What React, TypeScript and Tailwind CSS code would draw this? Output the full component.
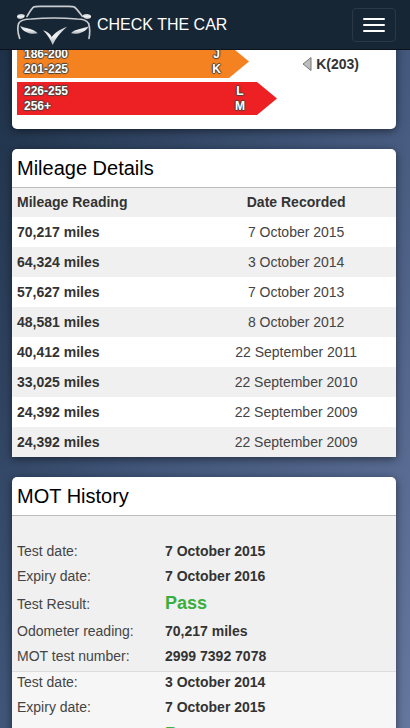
type MotTest = {
  rows: { label: string; value: string }[];
};

const bands = [
  {
    ranges: ["186-200", "201-225"],
    letters: ["J", "K"],
    size: "w-[232px] pr-7",
    fill: "bg-[#f58220]",
    marker: "K(203)"
  },
  {
    ranges: ["226-255", "256+"],
    letters: ["L", "M"],
    size: "w-[260px] pr-8",
    fill: "bg-[#ed2024]"
  }
];

const mileage = [
  { reading: "70,217 miles", date: "7 October 2015" },
  { reading: "64,324 miles", date: "3 October 2014" },
  { reading: "57,627 miles", date: "7 October 2013" },
  { reading: "48,581 miles", date: "8 October 2012" },
  { reading: "40,412 miles", date: "22 September 2011" },
  { reading: "33,025 miles", date: "22 September 2010" },
  { reading: "24,392 miles", date: "22 September 2009" },
  { reading: "24,392 miles", date: "22 September 2009" }
];

const motTests: MotTest[] = [
  {
    rows: [
      { label: "Test date:", value: "7 October 2015" },
      { label: "Expiry date:", value: "7 October 2016" },
      { label: "Test Result:", value: "Pass" },
      { label: "Odometer reading:", value: "70,217 miles" },
      { label: "MOT test number:", value: "2999 7392 7078" }
    ]
  },
  {
    rows: [
      { label: "Test date:", value: "3 October 2014" },
      { label: "Expiry date:", value: "7 October 2015" },
      { label: "Test Result:", value: "Pass" }
    ]
  }
];

function Logo() {
  return (
    <svg viewBox="0 0 225 123" className="h-[41px] w-[75px]" aria-hidden="true">
      <defs>
        <linearGradient id="chrome" x1="0" y1="0" x2="0" y2="1">
          <stop offset="0" stopColor="#c3c8cd" />
          <stop offset="0.5" stopColor="#f1f3f4" />
          <stop offset="1" stopColor="#aeb4ba" />
        </linearGradient>
      </defs>
      <g fill="none" stroke="#c9cdd2" strokeLinecap="round" strokeLinejoin="round">
        <path d="M33 37C40 26 46 14 53 9C57 6 70 7 85 7H145C160 7 171 6 175 9C183 15 191 27 199 37" strokeWidth="5" />
        <path d="M8 58C14 48 28 45 45 45C90 41 138 41 184 45C201 45 213 50 218 59" strokeWidth="4" />
        <path d="M8 58C4 71 5 87 11 103M218 59C222 72 222 87 219 103" strokeWidth="5" />
      </g>
      <path d="M3 37C5 30 18 28 26 33C27 39 24 43 15 45C7 46 3 43 3 37Z" fill="url(#chrome)" />
      <path d="M226 37C223 30 209 28 201 33C200 39 203 43 212 45C220 46 225 43 226 37Z" fill="url(#chrome)" />
      <path d="M12 66C27 73 54 73 65 88C48 92 23 88 12 66Z" fill="url(#chrome)" />
      <path d="M219 66C205 74 176 74 165 88C181 92 207 88 219 66Z" fill="url(#chrome)" />
      <path d="M81 79C93 83 102 88 107 99C117 86 131 76 153 68C134 84 119 102 110 123C103 106 94 92 81 79Z" fill="url(#chrome)" />
    </svg>
  );
}

function Navbar() {
  return (
    <header className="fixed inset-x-0 top-0 z-10 flex h-[50px] items-center justify-between border-b border-[#0c131c] bg-[#172635] pr-3.5 pl-4">
      <a href="#" className="flex items-center gap-1.5 text-base leading-5 text-white">
        <Logo />
        <span>CHECK THE CAR</span>
      </a>
      <button
        type="button"
        aria-label="Toggle navigation"
        className="flex h-[34px] w-11 flex-col items-center justify-center gap-1 rounded border border-[#2b3846]"
      >
        <span className="h-0.5 w-[22px] rounded-[1px] bg-white" />
        <span className="h-0.5 w-[22px] rounded-[1px] bg-white" />
        <span className="h-0.5 w-[22px] rounded-[1px] bg-white" />
      </button>
    </header>
  );
}

function EmissionsCard() {
  return (
    <section className="rounded-[5px] bg-white px-[5px] pt-[5px] pb-3.5 shadow-[0_2px_8px_rgba(0,0,0,0.5)]">
      <ul className="flex flex-col gap-1">
        {bands.map((band) => (
          <li key={band.ranges[0]} className="flex items-center justify-between">
            <div
              className={`${band.size} ${band.fill} flex justify-between pt-0.5 pb-px pl-[7px] text-xs leading-[15px] font-bold text-white [clip-path:polygon(0_0,calc(100%-20px)_0,100%_50%,calc(100%-20px)_100%,0_100%)] [text-shadow:1px_0_1px_#444,-1px_0_1px_#444,0_1px_1px_#444,0_-1px_1px_#444]`}
            >
              <div>
                {band.ranges.map((range) => (
                  <p key={range}>{range}</p>
                ))}
              </div>
              <div className="text-center">
                {band.letters.map((letter) => (
                  <p key={letter}>{letter}</p>
                ))}
              </div>
            </div>
            {band.marker && (
              <p className="flex items-center gap-1 pt-1 pr-8 font-bold">
                <svg viewBox="0 0 10 16" className="h-4 w-2.5" aria-hidden="true">
                  <path d="M9 1.5V14.5L1 8Z" fill="#bdbdbd" stroke="#777" strokeLinejoin="round" />
                </svg>
                {band.marker}
              </p>
            )}
          </li>
        ))}
      </ul>
    </section>
  );
}

function MileageCard() {
  return (
    <section className="rounded-t-[5px] bg-white shadow-[0_2px_8px_rgba(0,0,0,0.5)]">
      <h2 className="px-[5px] py-[5px] text-xl leading-7 text-black">Mileage Details</h2>
      <table className="w-full border-separate border-spacing-0">
        <thead>
          <tr className="h-[30px] bg-[#f0f0f0]">
            <th className="w-[48%] border-t border-[#bbb] px-[5px] pb-0.5 text-left">Mileage Reading</th>
            <th className="border-t border-[#bbb] px-[5px] pb-0.5 text-center">Date Recorded</th>
          </tr>
        </thead>
        <tbody>
          {mileage.map((row, index) => (
            <tr key={index} className="h-[30px] even:bg-[#f0f0f0]">
              <td className="px-[5px] font-bold">{row.reading}</td>
              <td className="px-[5px] text-center text-[#444]">{row.date}</td>
            </tr>
          ))}
        </tbody>
      </table>
    </section>
  );
}

function MotCard() {
  return (
    <section className="overflow-hidden rounded-t-[5px] bg-white shadow-[0_2px_8px_rgba(0,0,0,0.5)]">
      <h2 className="border-b border-[#bbb] px-[5px] py-[5px] text-xl leading-7 text-black">MOT History</h2>
      {motTests.map((test, index) => (
        <dl
          key={index}
          className="flex flex-col gap-[5px] px-[5px] pb-[5px] first-of-type:bg-[#f0f0f0] first-of-type:pt-[25px] not-first-of-type:border-t not-first-of-type:border-[#ddd] not-first-of-type:bg-[#f6f6f6]"
        >
          {test.rows.map((row) => (
            <div key={row.label} className="flex items-center">
              <dt className="w-[148px] text-[#444]">{row.label}</dt>
              <dd className={row.value === "Pass" ? "text-lg leading-[25px] font-bold text-[#3aae3e]" : "font-bold"}>
                {row.value}
              </dd>
            </div>
          ))}
        </dl>
      ))}
    </section>
  );
}

export default function App() {
  return (
    <div className="h-screen overflow-y-auto bg-linear-to-br from-[#1c2f45] via-[#41567a] to-[#66779f] font-['Liberation_Sans',Arial,sans-serif] text-sm leading-5 text-[#333] [scrollbar-width:none]">
      <Navbar />
      <main className="flex flex-col gap-5 pt-10 pr-3.5 pl-3">
        <EmissionsCard />
        <MileageCard />
        <MotCard />
      </main>
    </div>
  );
}
